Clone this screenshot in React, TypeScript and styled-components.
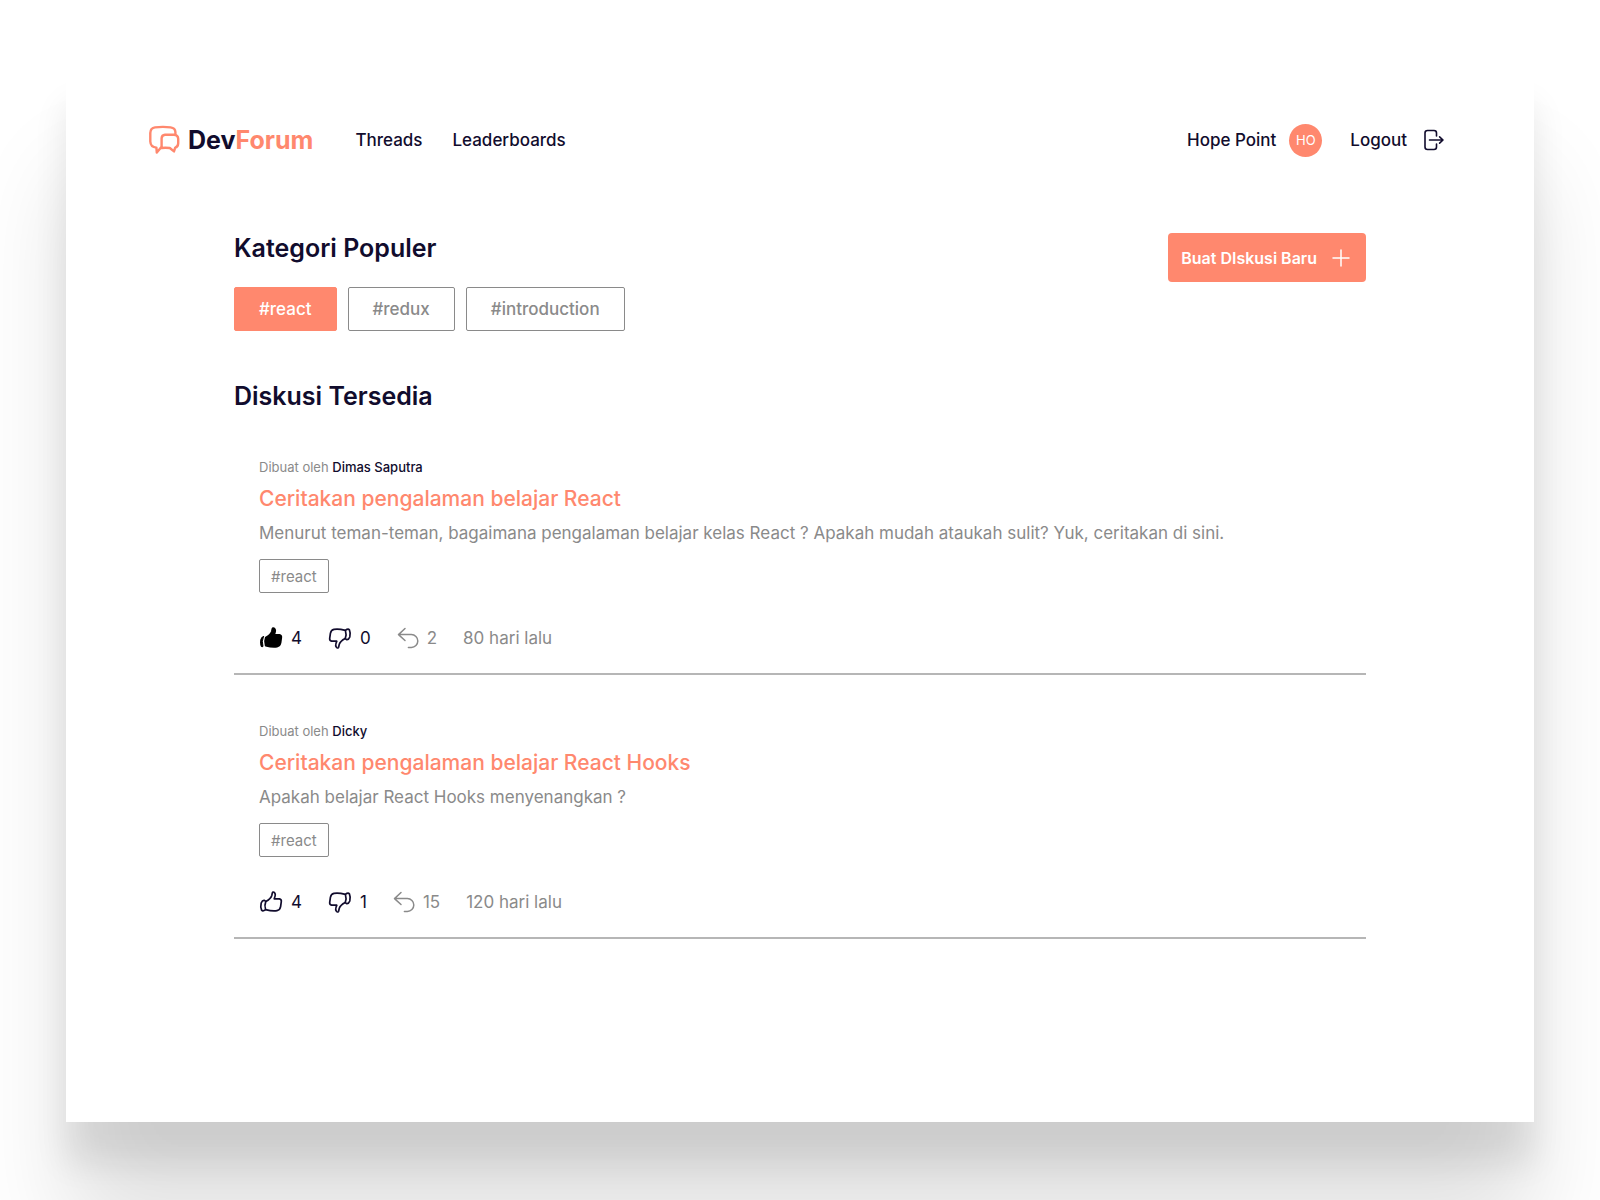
import React from 'react';
import styled, { createGlobalStyle, css } from 'styled-components';

const Global = createGlobalStyle`
  * { box-sizing: border-box; }
  body { margin: 0; background: #fff; color: #110c2d; font-family: Inter, "Liberation Sans", sans-serif; }
  h1, h2, h3, p, ul { margin: 0; padding: 0; }
  button, input { font: inherit; }
`;

const coral = '#ff886e';
const navy = '#110c2d';
const grey = '#8a8a8a';

const Stage = styled.div`
  min-height: 100vh;
  padding: 66px 66px 78px;
  overflow: hidden;
  display: flex;
`;

const Window = styled.div`
  flex: 1;
  background: #fff;
  padding: 48px 84px 48px 82px;
  box-shadow: 0 40px 32px rgba(0, 0, 0, 0.09), 0 108px 92px rgba(0, 0, 0, 0.12);
`;

const Header = styled.header`
  display: flex;
  align-items: center;
  justify-content: space-between;
  height: 52px;
  padding-right: 5px;
`;

const Group = styled.div<{ $gap: number }>`
  display: flex;
  align-items: center;
  gap: ${p => p.$gap}px;
`;

const Brand = styled.a`
  display: flex;
  align-items: center;
  gap: 8px;
  color: ${navy};
  text-decoration: none;
  font-size: 25px;
  line-height: 32px;
  font-weight: 700;
  span { color: ${coral}; }
`;

const navText = css`
  color: ${navy};
  font-size: 17px;
  line-height: 24px;
  font-weight: 500;
  text-decoration: none;
`;

const NavLink = styled.a`${navText}`;

const LogoutButton = styled.button`
  ${navText}
  display: flex;
  align-items: center;
  gap: 16px;
  padding: 0;
  border: 0;
  background: none;
`;

const Avatar = styled.span`
  display: grid;
  place-items: center;
  width: 33px;
  height: 33px;
  border-radius: 50%;
  background: ${coral};
  color: #fff;
  font-size: 13px;
`;

const Main = styled.main`
  padding: 67px 84px 0 86px;
`;

const Top = styled.section`
  display: flex;
  justify-content: space-between;
  align-items: flex-start;
`;

const Heading = styled.h2`
  font-size: 25px;
  line-height: 30px;
  font-weight: 600;
`;

const Tags = styled.div`
  display: flex;
  gap: 11px;
  margin-top: 24px;
`;

const Tag = styled.button<{ $active?: boolean; $small?: boolean }>`
  height: ${p => (p.$small ? 34 : 44)}px;
  padding: 0 ${p => (p.$small ? 11 : 24)}px;
  border: 1px solid ${p => (p.$active ? coral : grey)};
  border-radius: 2px;
  background: ${p => (p.$active ? coral : '#fff')};
  color: ${p => (p.$active ? '#fff' : grey)};
  font-size: ${p => (p.$small ? 15 : 17)}px;
  font-weight: ${p => (p.$small ? 400 : 500)};
`;

const CreateButton = styled.button`
  display: flex;
  align-items: center;
  gap: 12px;
  height: 49px;
  padding: 0 13px;
  border: 0;
  border-radius: 4px;
  background: ${coral};
  color: #fff;
  font-size: 16px;
  font-weight: 600;
`;

const List = styled.section`
  margin-top: 50px;
`;

const Thread = styled.article`
  padding: 48px 25px 23px;
  border-bottom: 2px solid #b6b6b6;
`;

const Author = styled.p`
  color: ${grey};
  font-size: 13px;
  line-height: 16px;
  strong { color: ${navy}; font-weight: 500; }
`;

const Title = styled.h3`
  margin-top: 10px;
  font-size: 21px;
  line-height: 28px;
  font-weight: 500;
  a { color: ${coral}; text-decoration: none; }
`;

const Body = styled.p`
  margin: 8px 0 14px;
  color: ${grey};
  font-size: 17px;
  line-height: 24px;
`;

const Stats = styled.div`
  display: flex;
  align-items: center;
  gap: 26px;
  margin-top: 33px;
`;

const Stat = styled.button<{ $muted?: boolean }>`
  display: flex;
  align-items: center;
  gap: 8px;
  padding: 0;
  border: 0;
  background: none;
  color: ${p => (p.$muted ? grey : navy)};
  font-size: 17px;
  line-height: 24px;
`;

const Age = styled.span`
  color: ${grey};
  font-size: 17px;
  line-height: 24px;
`;

const Line = { fill: 'none', stroke: 'currentColor', strokeLinecap: 'round', strokeLinejoin: 'round' } as const;

const Logo = () => (
  <svg width="32" height="32" viewBox="0 0 32 32" {...Line} stroke={coral} strokeWidth="2.4" aria-hidden="true">
    <path d="M13 23.5 L8.8 28.6 L8.4 23.6 Q2.6 23.2 2.3 17.5 V9 Q2.5 4 7 3.4 Q15 2.4 22.6 3.4 Q27.2 4 27.4 8 V10.6" />
    <path d="M17 10.8 H26 Q30 11 30.2 14.8 V19.4 Q30 23 27.2 23.6 L26 27.4 L21.8 24 Q17 23.6 13.6 24 V14.4 Q13.8 11 17 10.8Z" />
  </svg>
);

const ThumbShape = ({ filled }: { filled?: boolean }) => (
  <g {...Line} strokeWidth="1.7">
    <path
      fill={filled ? 'currentColor' : 'none'}
      d="M6.8 11.4 C9.6 10 11.8 8.4 12.8 5.4 L13.4 2.8 Q13.8 1.6 15 2.2 C17 3.4 16.4 6 15.2 8.8 L20.4 8.9 Q22.6 9.4 22.3 11.6 L21.6 16.6 Q21 20 18 20.6 C14 21.4 10.4 20.6 6.6 19.6 Q5.2 15.4 6.8 11.4Z"
    />
    {filled ? (
      <path fill="currentColor" strokeWidth="1" d="M4.4 10.6 Q2.6 10.6 1.8 13.6 Q1 17.6 2.2 20.4 Q3 21.2 4 20.4 Q2.4 15.4 4.4 10.6Z" />
    ) : (
      <path d="M6.8 11.4 L5.4 10.4 Q3.4 10 2.2 13 Q1.2 17 2.6 20.2 Q4 21.6 6.6 19.6" />
    )}
  </g>
);

const Thumb = ({ down, filled }: { down?: boolean; filled?: boolean }) => (
  <svg width="24" height="24" viewBox="0 0 24 24" fill="none" color={filled ? '#000' : navy} aria-hidden="true">
    <g transform={down ? 'rotate(180 12 12)' : undefined}><ThumbShape filled={filled} /></g>
  </svg>
);

const Reply = () => (
  <svg width="22" height="22" viewBox="0 0 22 22" {...Line} strokeWidth="1.5" aria-hidden="true">
    <path d="M8 1.5 L1.5 7.6 L8 13.5 M1.5 7.6 H14.4 A6.3 6.3 0 0 1 14.4 20.4 H11.4" />
  </svg>
);

const Exit = () => (
  <svg width="22" height="22" viewBox="0 0 22 22" {...Line} strokeWidth="1.6" aria-hidden="true">
    <path d="M13.5 7 V4 Q13.5 1.5 11 1.5 H4.5 Q2 1.5 2 4 V18 Q2 20.5 4.5 20.5 H11 Q13.5 20.5 13.5 18 V15 M6.5 11 H20 M16.6 7.8 L20 11 L16.6 14.2" />
  </svg>
);

const Plus = () => (
  <svg width="24" height="24" viewBox="0 0 24 24" {...Line} strokeWidth="1.5" aria-hidden="true">
    <path d="M12 4 V20 M4 12 H20" />
  </svg>
);

const threads = [
  {
    author: 'Dimas Saputra',
    title: 'Ceritakan pengalaman belajar React',
    body: 'Menurut teman-teman, bagaimana pengalaman belajar kelas React ? Apakah mudah ataukah sulit? Yuk, ceritakan di sini.',
    up: 4, liked: true, down: 0, replies: 2, age: '80 hari lalu',
  },
  {
    author: 'Dicky',
    title: 'Ceritakan pengalaman belajar React Hooks',
    body: 'Apakah belajar React Hooks menyenangkan ?',
    up: 4, liked: false, down: 1, replies: 15, age: '120 hari lalu',
  },
];

export default function App() {
  return (
    <>
      <Global />
      <Stage>
        <Window>
          <Header>
            <Group $gap={42}>
              <Brand href="#"><Logo /><div>Dev<span>Forum</span></div></Brand>
              <Group as="nav" $gap={30}>
                <NavLink href="#threads">Threads</NavLink>
                <NavLink href="#leaderboards">Leaderboards</NavLink>
              </Group>
            </Group>
            <Group $gap={28}>
              <Group $gap={13}>
                <NavLink href="#profile">Hope Point</NavLink>
                <Avatar>HO</Avatar>
              </Group>
              <LogoutButton type="button">Logout<Exit /></LogoutButton>
            </Group>
          </Header>
          <Main>
            <Top>
              <div>
                <Heading>Kategori Populer</Heading>
                <Tags>
                  <Tag type="button" $active>#react</Tag>
                  <Tag type="button">#redux</Tag>
                  <Tag type="button">#introduction</Tag>
                </Tags>
              </div>
              <CreateButton type="button">Buat DIskusi Baru<Plus /></CreateButton>
            </Top>
            <List>
              <Heading>Diskusi Tersedia</Heading>
              {threads.map(t => (
                <Thread key={t.title}>
                  <Author>Dibuat oleh <strong>{t.author}</strong></Author>
                  <Title><a href="#thread">{t.title}</a></Title>
                  <Body>{t.body}</Body>
                  <Tag type="button" $small>#react</Tag>
                  <Stats>
                    <Stat type="button"><Thumb filled={t.liked} />{t.up}</Stat>
                    <Stat type="button"><Thumb down />{t.down}</Stat>
                    <Stat type="button" $muted><Reply />{t.replies}</Stat>
                    <Age>{t.age}</Age>
                  </Stats>
                </Thread>
              ))}
            </List>
          </Main>
        </Window>
      </Stage>
    </>
  );
}
